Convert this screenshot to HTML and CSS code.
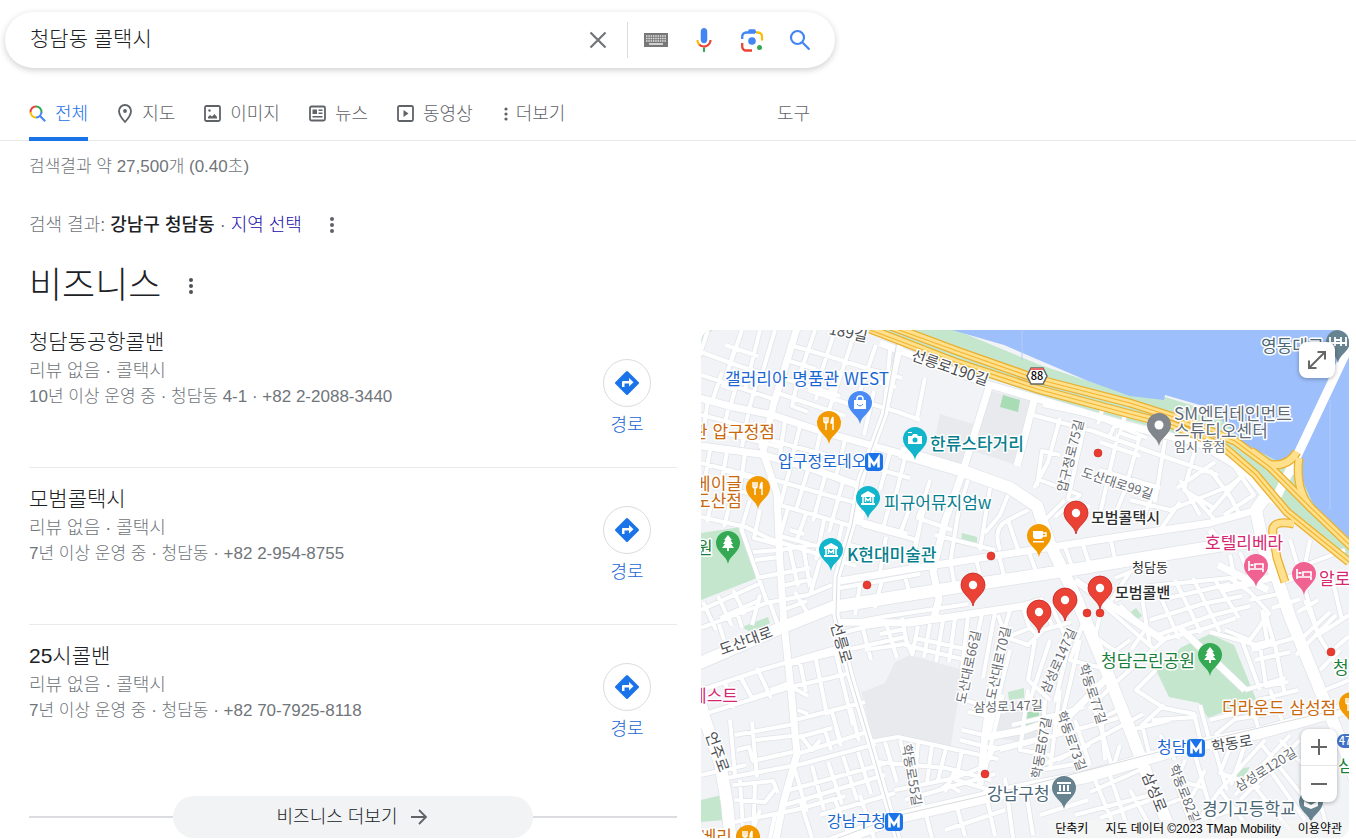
FILE: index.html
```html
<!DOCTYPE html>
<html lang="ko">
  <head>
    <meta charset="UTF-8" />
    <meta name="viewport" content="width=device-width, initial-scale=1.0" />
    <title>청담동 콜택시</title>
    <link rel="stylesheet" href="styles.css">
  </head>
  <body>
    <form class="search" role="search">
      <input class="search-input" type="text" name="q" value="청담동 콜택시" aria-label="검색" />
      <button class="icon-btn" type="reset" aria-label="지우기">
        <svg width="24" height="24" viewBox="0 0 24 24"><path d="M4.500 4.500l15 15M19.500 4.500l-15 15" stroke="#70757a" stroke-width="2.200" /></svg>
      </button>
      <span class="divider"></span>
      <button class="icon-btn" type="button" aria-label="키보드">
        <svg width="24" height="14" viewBox="0 0 24 14">
          <path fill="#777" d="M0 0h24v14H0z" />
          <path d="M2 3h20M2 5.500h20M2 8h20" stroke="#e4e4e4" stroke-width="1.500" stroke-dasharray="1.500 .8" />
          <path d="M5 11h14" stroke="#eee" stroke-width="1.500" />
        </svg>
      </button>
      <button class="icon-btn" type="button" aria-label="음성 검색">
        <svg width="26" height="26" viewBox="0 0 24 24">
          <path fill="#4285f4" d="M12 15c1.700 0 3-1.300 3-3V4c0-1.700-1.300-3-3-3S9 2.300 9 4v8c0 1.700 1.300 3 3 3z" />
          <path fill="#34a853" d="M11 18.900h2V23h-2z" />
          <path fill="#fbbc04" d="M7 12H5c0 1.900.8 3.700 2 5l1.400-1.400C7.600 14.700 7 13.400 7 12z" />
          <path fill="#ea4335" d="M12 17c-1.400 0-2.700-.6-3.600-1.500L7 16.900C8.300 18.200 10.100 19 12 19c3.900 0 7-3.100 7-7h-2c0 2.800-2.200 5-5 5z" />
        </svg>
      </button>
      <button class="icon-btn" type="button" aria-label="이미지로 검색">
        <svg width="24" height="24" viewBox="0 0 24 24" fill="none" stroke-width="2.300">
          <path stroke="#4285f4" d="M2.200 11V8.500a4 4 0 0 1 4-4H15" />
          <path fill="#4285f4" d="M7.500 5l1-3q.4-.8 1.300-.8h4.400q.9 0 1.300.8l1 3z" />
          <path stroke="#fbbc04" d="M16 4.500h2a4 4 0 0 1 4 4v4" />
          <path stroke="#ea4335" d="M2.200 15v3.500a4 4 0 0 0 4 4H12" />
          <circle cx="12" cy="13" r="3.800" fill="#4285f4" />
          <circle cx="19.500" cy="19.500" r="2.500" fill="#34a853" />
        </svg>
      </button>
      <button class="icon-btn" type="submit" aria-label="검색">
        <svg width="24" height="24" viewBox="0 0 24 24" fill="none" stroke="#4285f4" stroke-width="2.200"><circle cx="9.500" cy="9.500" r="6.500" /><path d="M14.500 14.500l7 7" /></svg>
      </button>
    </form>

    <nav class="tabs-bar">
      <div class="tabs">
        <a class="tab active" href="#">
          <svg width="18" height="18" viewBox="0 0 18 18" fill="none" stroke-width="2">
            <path stroke="#ea4335" d="M1.500 7.500A5.500 5.500 0 0 1 7 1.500" />
            <path stroke="#34a853" d="M7 1.500a5.500 5.500 0 0 1 5.500 6" />
            <path stroke="#fbbc04" d="M1.500 7a5.500 5.500 0 0 0 5.500 5.500" />
            <path stroke="#4285f4" d="M7 12.500A5.500 5.500 0 0 0 12.500 7M10.800 10.800l5.400 5.400" />
          </svg>
          전체</a>
        <a class="tab" href="#">
          <svg width="16" height="20" viewBox="0 0 16 20"><path d="M8 1a6 6 0 0 0-6 6c0 4.500 6 11 6 11s6-6.500 6-11a6 6 0 0 0-6-6z" fill="none" stroke="#5f6368" stroke-width="1.800" /><circle cx="8" cy="7" r="1.900" fill="#5f6368" /></svg>
          지도</a>
        <a class="tab" href="#">
          <svg width="17" height="18" viewBox="0 0 17 18"><rect x="1" y="1" width="15" height="15" rx="1.500" fill="none" stroke="#5f6368" stroke-width="1.800" /><circle cx="5.500" cy="5.500" r="1.200" fill="#5f6368" /><path fill="#5f6368" d="M4 13.500v-1.500l2-2 2 1.500 2.500-2.500 2.500 3v1.500z" /></svg>
          이미지</a>
        <a class="tab" href="#">
          <svg width="17" height="18" viewBox="0 0 17 18"><rect x="1" y="1.500" width="15" height="14" rx="1.500" fill="none" stroke="#5f6368" stroke-width="1.800" /><path fill="#5f6368" d="M3.500 4.500H8V9H3.500zM9.500 4.500h4V6h-4zM9.500 7.500h4V9h-4zM3.500 11h10v1.500h-10z" /></svg>
          뉴스</a>
        <a class="tab" href="#">
          <svg width="17" height="18" viewBox="0 0 17 18"><rect x="1" y="1" width="15" height="15" rx="1.500" fill="none" stroke="#5f6368" stroke-width="1.800" /><path fill="#5f6368" d="M6.500 5l5 3.500-5 3.500z" /></svg>
          동영상</a>
        <button class="tab tab-more" type="button">
          <svg width="8" height="16" viewBox="0 0 8 16" fill="#5f6368"><circle cx="4" cy="3" r="1.600" /><circle cx="4" cy="8" r="1.600" /><circle cx="4" cy="13" r="1.600" /></svg>
          더보기</button>
        <button class="tab tools" type="button">도구</button>
      </div>
    </nav>

    <main class="content">
      <p class="stats">검색결과 약 27,500개 (0.40초)</p>
      <p class="location">
        <span>검색 결과: <b>강남구 청담동</b> · <a href="#">지역 선택</a></span>
        <button class="dots" type="button" aria-label="옵션">
          <svg width="8" height="18" viewBox="0 0 8 18" fill="#5f6368"><circle cx="4" cy="3" r="2" /><circle cx="4" cy="9" r="2" /><circle cx="4" cy="15" r="2" /></svg>
        </button>
      </p>
      <div class="heading">
        <h1>비즈니스</h1>
        <button class="dots" type="button" aria-label="이 결과에 대한 정보">
          <svg width="8" height="18" viewBox="0 0 8 18" fill="#4d5156"><circle cx="4" cy="3" r="2" /><circle cx="4" cy="9" r="2" /><circle cx="4" cy="15" r="2" /></svg>
        </button>
      </div>

      <div class="columns">
        <section>
          <ul class="places">
            <li class="place">
              <div class="info">
                <h2>청담동공항콜밴</h2>
                <p>리뷰 없음 · 콜택시</p>
                <p class="detail">10년 이상 운영 중 · 청담동 4-1 · +82 2-2088-3440</p>
              </div>
              <a class="route" href="#">
                <span class="circle"><svg width="24" height="24" viewBox="0 0 24 24"><path fill="#1a73e8" d="M11 .5q1-1 2 0L23.500 11q1 1 0 2L13 23.500q-1 1-2 0L.5 13q-1-1 0-2z" /><path fill="#fff" d="M7 16v-5q0-1 1-1h6V7l4.500 4.200L14 15.500v-3H9.500V16z" /></svg></span>
                경로</a>
            </li>
            <li class="place">
              <div class="info">
                <h2>모범콜택시</h2>
                <p>리뷰 없음 · 콜택시</p>
                <p class="detail">7년 이상 운영 중 · 청담동 · +82 2-954-8755</p>
              </div>
              <a class="route" href="#">
                <span class="circle"><svg width="24" height="24" viewBox="0 0 24 24"><path fill="#1a73e8" d="M11 .5q1-1 2 0L23.500 11q1 1 0 2L13 23.500q-1 1-2 0L.5 13q-1-1 0-2z" /><path fill="#fff" d="M7 16v-5q0-1 1-1h6V7l4.500 4.200L14 15.500v-3H9.500V16z" /></svg></span>
                경로</a>
            </li>
            <li class="place">
              <div class="info">
                <h2>25시콜밴</h2>
                <p>리뷰 없음 · 콜택시</p>
                <p class="detail">7년 이상 운영 중 · 청담동 · +82 70-7925-8118</p>
              </div>
              <a class="route" href="#">
                <span class="circle"><svg width="24" height="24" viewBox="0 0 24 24"><path fill="#1a73e8" d="M11 .5q1-1 2 0L23.500 11q1 1 0 2L13 23.500q-1 1-2 0L.5 13q-1-1 0-2z" /><path fill="#fff" d="M7 16v-5q0-1 1-1h6V7l4.500 4.200L14 15.500v-3H9.500V16z" /></svg></span>
                경로</a>
            </li>
          </ul>
          <div class="more">
            <button type="button">비즈니스 더보기
              <svg width="20" height="20" viewBox="0 0 20 20" fill="none" stroke="#5f6368" stroke-width="1.800"><path d="M2 10h15M10 3l7 7-7 7" /></svg>
            </button>
          </div>
        </section>

        <section class="map">
          <svg class="map-canvas" viewBox="701 330 648 508" preserveAspectRatio="xMidYMid slice">
            <defs>
              <path id="pin" d="M0 21C-1 13-12 9-12 0A12 12 0 0 1 12 0C12 9 1 13 0 21z" />
              <g id="redpin"><use href="#pin" fill="#ea4335" stroke="#c5221f" stroke-width=".8" /><circle r="4.200" fill="#fff" /></g>
              <g id="food" stroke="#fff" stroke-width="1.500" fill="none"><path d="M-5-6v4q0 2 2 2t2-2v-4M-3-6V7" /><path d="M4-6V7M4-6q-2 2-2 6h2" fill="#fff" /></g>
              <g id="museum" fill="#fff"><path d="M-7-3L0-7l7 4v2H-7zM-7 5H7v2H-7z" /><path d="M-5-1V5M5-1V5M-2.500 4V0L0 2.500 2.500 0v4" fill="none" stroke="#fff" stroke-width="1.500" /></g>
              <g id="bed" fill="none" stroke="#fff" stroke-width="1.700"><path d="M-7-5V5M-7 3H7V6M7 2V-2H-1V2" /><path d="M-4-2v2" stroke-width="3" /></g>
              <path id="tree" fill="#fff" d="M0-8l4 5H2.500L5 1H3l3 4H1v3h-2V5h-5l3-4h-2l2.500-4H-4z" />
              <g id="metro"><rect x="-9" y="-9" width="18" height="18" rx="4" fill="#1a73e8" /><path d="M-4.500 5.500V-4L0 2.500 4.500-4v9.500" fill="none" stroke="#fff" stroke-width="2.600" /></g>

              <!-- side streets -->
              <path id="streets" d="
                M701 352l38 14 36 11M708 330l-10 30M742 330l-16 46M760 330l-15 60M775 330l-13 44M701 375l72 24
                M725 345l33 11M722 372l-10 30M740 372l-9 32M758 378l-9 31M735 390l-14-5M735 348l-4 12
                M790 345l38 11 44 14 30 8M786 360l30 9M815 330l-17 50M835 330l-20 62M855 332l-26 78M876 345l-20 58
                M808 390l35 12 24 8M782 378l58 18M800 370l-8 36 16 6M820 378l-4 22M838 370l-9 26M775 392l70 24
                M890 350l-5 55M858 400l40 12 22 8M870 380l26 7M925 378l-8 40M864 435l10-44
                M701 415l60 15M708 400l-5 35M728 410l-7 30M748 414l-6 33M720 432l60 15M765 428l-5 20
                M785 420l-6 42M800 426l-9 36M820 434l-8 38M845 440l-9 36M870 448l-8 34M770 440l90 24 50 14M890 452l-10 38M905 458l-9 36
                M701 463l55 14M710 450l-6 35M727 452l-7 36M745 454l-7 46M701 480l50 14M722 470l30 8M768 478l45 13 47 13
                M790 468l-10 38M808 470l-12 40M825 476l-12 45M843 482l-14 50M872 490l-12 32M892 496l-10 36M912 502l-12 32M780 505l75 22
                M701 517l45 10 24 12 86 27M712 500l-5 22M730 503l-6 24M750 500l-9 30M760 510l-6 28 22 6M788 508l-8 28 30 8M806 514l-10 28M824 520l-8 40M790 530l14 4M842 525l-10 44
                M741 528l26 74M753 552l28-2 30-5 25 3M755 560l24-3M790 550l8 36M803 545l7 42M756 578l54-10M782 586l30-7M820 560l-10 35
                M701 610l60-27M703 602l13 28M718 596l14 30M733 590l12 24M760 595l-8 30M701 628l65-25 42-8 24-10M720 618l40-18M724 640l-5-16M742 628l-5-16M770 603l8 22M795 592l13 22M783 610l24-9
                M840 588l80-14M860 585l-5 30M882 580l-7 28M905 576l6 24M880 572l6-35M912 565l8-40M850 545l67 18M862 525l55 15M925 505l-15 60M948 512l-13 50M935 535l60 15
                M968 480l-10 34-8 50M990 488l-10 62M1008 495l-8 20-15 18M930 480l-12 38 34 12M935 500l30 8M932 562l5 25M950 560l4 22M975 556l5 18M998 552l6 24M1028 550l9 24M1000 550q-8-22 8-30l20-10M1008 520l10 30M1065 547l8 22M1082 542l8 24M1110 537l6 26
                M838 625l50-9 80-12M845 632l20-5 75-11M820 655l40-8 45-10 7 17M862 625l9 35M885 620l12 38M865 650l40-6M902 618l5 26M880 634l25-5
                M918 626l-6 30M930 624l-6 33M943 620l-7 42M955 618l-6 44M968 616l-6 52M982 614l-4 18M995 612l-12 66M1010 610l-8 28M905 645l65 16M915 638l55 12
                M701 690l60-20 85-25M725 683l9 25M740 676l12 22 15-5M757 668l14 30M790 664l50-12M701 715l90-28 60-14M800 662l6 30M815 655l12 60M770 690l16-6 22 12M835 650l18 75
                M730 720l5 55M752 722l5 55M735 735l60-11M756 740l36-4M757 760l36-8M737 750l12-3 4 14 8-2M795 720l70-18M796 738l36-10M798 710l10 4M832 712l8 28M850 705l9 36M854 690l12 38M800 735l12 15 8-10M825 730l6 20M836 728l5 18M867 732l-70 22
                M701 775l45-10M727 778l75-14 74-20M733 785l40-4 5 12M795 770l12 42M812 766l12 44M828 762l14 42M843 756l14 44M858 752l13 42M790 790l100-28M785 805l100-30M755 785l-2 52M740 780l3 50M735 800l30 2 12-15M760 810l-10 28M800 800l12 38M820 815l75-22M735 822l60-12 50-14M775 815l-5 23M835 800l15 38M860 795l14 43
                M870 742l28-5 100 22M876 762l70 6 45 12M885 742l12 40M900 740l12 50M918 742l-3 40M932 745l-5 37M946 748l-8 32M955 770l-10 22M962 750l-6 30 34 10M895 790l60-12 30-12 10-20M905 800l90-26M920 792l12 46M940 790l8-6 12 8M955 800l10 36M985 790l10 46M1005 778l8 60M1025 785l8 50M945 830l60-20
                M998 615l8 22 22 8 15-15 28-8M1023 607l6 20 10 10M1050 603l16 35M1040 600l12 25M1000 640l30-12M1010 650l-22 88M1035 640l-7 40 22 20M1050 640l-20 60M1070 640l-15 62M1084 620l-14 40 32 8M960 740l35 9 42-10M965 700l40 12M968 712l25 5M962 730l30 7M1003 695l-18 75M1028 690l-8 60 30 5M1012 725l42-10 30-8
                M1080 640l-22 95M1000 750l28-7 90-25M1045 700l-5 70 35-6M1088 690l10 30 20-10M1100 700l5 60M1060 690l-10 80M1120 745l-6 20M1100 725l12 42M1075 720l15 45M1030 770l60-25M1058 760l30-16 55-30
                M1043 405l52 11 52 22M1033 415l60 16 55 20 70 24M1060 418l-12 44-14 26M1085 424l-7 30-10 45 22 8M1118 434l-18 80M1100 442l40 14M1140 436l-15 54-10 25M1060 455l-18-4-5 35M1040 480l40 15-25 22M1065 500l-20 20M1100 470l60 18M1165 440l-10 62M1195 450l-11 40 30 18M1215 462l-38 26M1130 500l40 10 60-24 22-18M1180 480l20 35M1155 490l-15 35M1210 470l24 32M1230 460l24 35-30 20M1240 478l-30 34
                M1102 410l-4 14M1115 425l-6 12M1125 415l-5 18 18 6M1215 520l-22-25M1240 515l-14-26M1160 530l20-28
                M1115 578l45-18M1130 572l-20 30M1115 600l35-14 80-8 20 14 18 20M1140 586l10 60M1155 584l24 55M1175 580l26 53M1193 578l27 54M1215 580l24 38M1230 555l5 25M1240 552l12 30M1160 600l70-16M1150 620l52-16 40-8M1155 636l55-20 40-10M1100 602l55 48M1120 605l25 25-14 20M1100 615l-5 22 40 28 35-30M1135 665l-22 20-24 24M1130 640l-30 22M1160 640l40-10 36-12M1225 630l25 10 20-28M1240 635l20 55M1265 612l8 28-22 6M1250 600l38-8M1272 608l28-9M1252 650l42-12
                M1210 632l50 14 6 40 22-4M1262 610l5 30M1275 645l10 50M1255 660l35-8M1245 690l40-12M1258 700l40-10M1270 690l12 30
                M1290 540l12 40 15 50M1310 540l-5 25 40-15M1305 600l14 36 18 30M1296 655l40-40M1300 640l30-28M1318 600l-20 12M1330 570l12 50M1318 635l31-20M1335 648l14-12M1320 670l20-20M1325 690l24-10
                M1156 670l-20 20 28 18 30 6 10 40M1164 705l-22 20 8 32M1152 720l45-3M1200 705l12 45M1210 720l50-13M1215 735l20-16 40-6M1250 700l10 34M1130 730l40-10M1160 735l15 25M1185 760l-8 20 28 8M1195 755l20 70M1215 750l12 40M1205 770l-15 30M1230 748l-10 25 40 14M1245 745l-14 40M1265 740l-45 50-25 35M1290 735l-55 60M1240 800l60-60M1262 745l40 50M1280 740l30 32M1220 790l30 40M1245 775l45 55M1270 770l35 50M1175 780l18 50M1150 800l-50 18M1140 770l-50 22M1110 775l20 60M1095 780l24 58M1088 800l-48 15M1130 790l25 45M1165 805l30-12M1310 770l20 66M1200 820l60-18M1075 815l75-20M1180 835l40-13"
              />
              <path id="roads" d="
                M700 398l33 9 40 8 47 16 100 28
                M797 328l-24 78-10 46 14 42 3 70 4 60 6 56 7 74-14 50-8 40
                M990 384l-27 87-18 50-12 50 6 28-6 22 M1034 401l-17 65
                M880 343l107 41 143 42 70 18 44 26 26 32
                M1257 510l-47 13-80 12-110 17-110 17-70 12
                M838 622l72 1 113-17 20-6
                M701 446l59 8 50 14 50 18-3 35 50 14
                M900 345l-16 70-24 65-8 45-15 52-1 38 14 60 20 67 28 98
                M1005 640l-14 50-6 45-5 50M1245 690l-65-62M1163 640l-63-42-25-18
                M1110 675l-40 40-45 15-38 7M1220 590l35-8 22-6M1210 530l15 20
                M1268 590l-50-25M1285 580l24-8" />
              <path id="avenues" d="
                M900 452l60 18 50 18 27 18 12 36 28 58 32 77 20 50 20 53 30 70
                M693 666l90-39 50-20 87-14 57-9 100-15 72-12 81-13 34-2 18-4
                M697 690l8 30 15 43 7 40 4 40
                M1270 490l-14 20 8 40 13 28 13 39 26 63 12 30 20 48 16 50
                M830 843l70-26 130-30 56-10 100-30 73-14 92-26" />
            </defs>

            <rect x="701" y="330" width="648" height="508" fill="#f1f3f6" />
            <g fill="#e8eaee">
              <path d="M987 390l46 11-16 64-44-14zM940 414l33 10-12 42-30-10zM862 692l23-9 10-21 15-7 53 15-13 80-53-12-24 3-13-55zM990 710l45-14 15 25-20 22-42-6z" />
            </g>
            <g fill="#c3e6cd">
              <path d="M866 330h90l84 35 90 30 35 2 45 14 40 32 32 22 28 24 39 40v35l-62-54-58-46-57-32-93-24-100-33z" />
              <path d="M701 533l40-6 16 51-56 22zM742 627l26-10 2 6-18 10zM1210 634l24 11 22 54-48 19-9-15-30-6-13-27 26-23zM962 533l15 4v8l-16-3zM1128 614l8-6 6 8-8 6zM701 800l21-5 2 25-23 2zM1238 769l12-2-6 10-8 3zM1008 692l16-4v10l-15 2zM701 330h12l-12 10z" />
              <path fill="#a8dcb5" d="M1003 395l17 5-2 12-18-5zM1026 712h13v16l-13 1z" />
            </g>
            <path fill="#9dbffb" d="M952 330h397v208l-36-34-20-45-14 3-34-18-35-36-45-13-1 5-34-4-42-15-84-36z" />
            <path d="M1022 330v30M1330 400v110" stroke="#b3cdfb" />

            <g fill="none" stroke-linejoin="round">
              <use href="#streets" stroke="#e0e3e8" stroke-width="5.500" />
              <use href="#roads" stroke="#e0e3e8" stroke-width="8.500" />
              <use href="#avenues" stroke="#e0e3e8" stroke-width="13.500" />
              <use href="#streets" stroke="#fff" stroke-width="4" />
              <use href="#roads" stroke="#fff" stroke-width="7" />
              <use href="#avenues" stroke="#fff" stroke-width="12" />
              <path d="M899 330l-15 85-24 65-8 45-15 52-1 38 14 60 20 67 28 98M830 841l70-26 130-30 156-40 163-38" stroke="#d9dbdf" />
            </g>

            <!-- riverside expressway and bridge -->
            <g fill="none">
              <path d="M1352 340l-55 116-24 48" stroke="#fff" stroke-width="9" />
              <g stroke="#eab030" stroke-width="9">
                <path id="ramps" d="M1297 452q-10 16-28 12l-18-13M1299 458q-4 32 12 50M1294 524q-24-5-21 10l4 24 8 24" />
                <path id="expressway" d="M885 324l75 28 77 27 93 24 50 16 55 22 35 26 40 40 45 43M870 329l85 33 82 27 93 25 43 11 52 23 30 26 32 38 62 50" />
              </g>
              <g stroke="#ffe08c" stroke-width="6.500"><use href="#ramps" /><use href="#expressway" /></g>
              <path d="M885 325l75 27 77 27 93 24 50 16 55 22 35 26 40 40 45 43M870 330l85 32 82 27 93 25 43 11 52 23 30 26 32 38 62 50" stroke="#f2b632" stroke-width="1.200" />
            </g>

            <g class="street-label">
              <text x="848" y="338" transform="rotate(12 848 334)">189길</text>
              <text x="950" y="373" transform="rotate(19 950 368)">선릉로190길</text>
              <text x="746" y="646" transform="rotate(-20 746 641)">도산대로</text>
              <text x="841" y="648" transform="rotate(74 841 643)">선릉로</text>
              <text x="717" y="757" transform="rotate(70 717 752)">언주로</text>
              <text x="1232" y="749" transform="rotate(-10 1232 744)">학동로</text>
              <text x="1154" y="797" transform="rotate(68 1154 792)">삼성로</text>
            </g>
            <g class="street-label small">
              <text x="1071" y="460" transform="rotate(-76 1071 456)">압구정로75길</text>
              <text x="1117" y="488" transform="rotate(18 1117 484)">도산대로99길</text>
              <text x="969" y="671" transform="rotate(-78 969 667)">도산대로66길</text>
              <text x="999" y="667" transform="rotate(-78 999 663)">도산대로70길</text>
              <text x="1059" y="665" transform="rotate(-66 1059 661)">삼성로147길</text>
              <text x="1092" y="698" transform="rotate(72 1092 694)">학동로77길</text>
              <text x="1008" y="711" transform="rotate(-2 1008 707)">삼성로147길</text>
              <text x="1042" y="752" transform="rotate(-80 1042 748)">학동로67길</text>
              <text x="1071" y="745" transform="rotate(70 1071 741)">학동로73길</text>
              <text x="911" y="779" transform="rotate(80 911 775)">학동로55길</text>
              <text x="1184" y="798" transform="rotate(68 1184 794)">학동로82길</text>
              <text x="1266" y="774" transform="rotate(-32 1266 770)">삼성로120길</text>
            </g>

            <g transform="translate(1037 376)"><path d="M-10 0l4-8H6l4 8-4 8H-6z" fill="#fff" stroke="#666" stroke-width="1.500" /><path d="M-6-8H6l1 2H-7z" fill="#e66" /><text class="shield" y="4">88</text></g>

            <!-- points of interest -->
            <g transform="translate(860 403)"><use href="#pin" fill="#4a8af4" /><path fill="#fff" d="M-6-3H6V6H-6z" /><path d="M-3-2v-2q0-3 3-3t3 3v2" fill="none" stroke="#fff" stroke-width="1.500" /><path d="M-3 1q3 4 6 0" stroke="#4a8af4" fill="none" /></g>
            <g transform="translate(829 423)"><use href="#pin" fill="#f29900" /><use href="#food" /></g>
            <g transform="translate(758 488)"><use href="#pin" fill="#f29900" /><use href="#food" /></g>
            <g transform="translate(748 837)"><use href="#pin" fill="#f29900" /><use href="#food" /></g>
            <g transform="translate(1351 704)"><use href="#pin" fill="#f29900" /><use href="#food" /></g>
            <g transform="translate(1039 536)"><use href="#pin" fill="#f29900" /><path fill="#fff" d="M-6-5H4v5q0 3-3 3h-4q-3 0-3-3zM-6 5H5v1.500H-6z" /><path d="M4-3h3v3H4" stroke="#fff" fill="none" stroke-width="1.500" /></g>
            <g transform="translate(915 439)"><use href="#pin" fill="#12b5cb" /><path fill="#fff" d="M-7-3h4l1-2h4l1 2h4v8H-7zM-7-7h4v1h-4z" /><circle cy="1" r="2.500" fill="#12b5cb" /></g>
            <g transform="translate(868 498)"><use href="#pin" fill="#12b5cb" /><use href="#museum" /></g>
            <g transform="translate(831 550)"><use href="#pin" fill="#12b5cb" /><use href="#museum" /></g>
            <g transform="translate(728 543)"><use href="#pin" fill="#34a853" /><use href="#tree" /></g>
            <g transform="translate(1210 655)"><use href="#pin" fill="#34a853" /><use href="#tree" /></g>
            <g transform="translate(1159 425)"><use href="#pin" fill="#80868b" /><circle r="4.500" fill="#fff" /></g>
            <g transform="translate(1256 566)"><use href="#pin" fill="#f06292" /><use href="#bed" /></g>
            <g transform="translate(1304 574)"><use href="#pin" fill="#f06292" /><use href="#bed" /></g>
            <g transform="translate(1338 342)"><use href="#pin" fill="#67838f" /><path d="M-8 4V-5M8 4V-5M-3 4V-5M3 4V-5M-9 1H9M-3-2H3" stroke="#fff" stroke-width="1.800" /></g>
            <g transform="translate(1064 788)"><use href="#pin" fill="#67838f" /><path fill="#fff" d="M-7-6H7v2H-7zM-7 4H7v2H-7zM-5-3h2v6h-2zM-1-3h2v6h-2zM3-3h2v6H3z" /></g>
            <g transform="translate(1311 802)"><use href="#pin" fill="#67838f" /><path fill="#fff" d="M-7-1L0 3 7-1v5L0 7l-7-3z" /></g>
            <g transform="translate(1345 741)"><rect x="-8" y="-7" width="24" height="14" rx="7" fill="#4271c6" /><text class="shield white" x="0" y="4">47</text></g>

            <g class="poi">
              <g fill="#1a67d2"><text x="725" y="385">갤러리아 명품관 WEST</text><text class="station" x="778" y="467">압구정로데오</text><text class="station" x="1157" y="753">청담</text><text class="station" x="827" y="827">강남구청</text></g>
              <g fill="#c9690c"><text class="end" x="775" y="438">관 압구정점</text><text class="end" x="742" y="490">베이글</text><text class="end" x="742" y="507">도산점</text><text x="1222" y="714">더라운드 삼성점</text><text class="end" x="732" y="843">베리</text></g>
              <g fill="#087f8e"><text class="strong" x="930" y="450">한류스타거리</text><text x="884" y="509">피규어뮤지엄w</text><text class="strong" x="847" y="561">K현대미술관</text></g>
              <g fill="#188038"><text x="697" y="554">원</text><text x="1101" y="667">청담근린공원</text><text x="1333" y="674">청</text><text x="1338" y="772">삼성</text></g>
              <g fill="#d62872"><text x="1205" y="549">호텔리베라</text><text x="1319" y="585">알로</text><text class="end" x="738" y="702">베스트</text></g>
              <g fill="#5f6b76"><text x="1174" y="420">SM엔터테인먼트</text><text x="1174" y="437">스튜디오센터</text><text class="tiny" x="1174" y="451">임시 휴점</text></g>
              <g fill="#4b6875"><text x="1261" y="352">영동대교</text><text x="987" y="800">강남구청</text><text x="1202" y="815">경기고등학교</text></g>
              <g fill="#2d2f31"><text class="small strong" x="1091" y="523">모범콜택시</text><text class="small strong" x="1115" y="598">모범콜밴</text><text class="tiny" x="1132" y="572">청담동</text></g>
            </g>
            <use href="#metro" x="874" y="462" />
            <use href="#metro" x="1196" y="748" />
            <use href="#metro" x="894" y="822" />

            <g fill="#ea3b30" stroke="#c5221f" stroke-width=".5">
              <circle cx="1098" cy="453" r="4" /><circle cx="991" cy="556" r="4" /><circle cx="867" cy="585" r="4" /><circle cx="1087" cy="613" r="4" /><circle cx="1100" cy="613" r="4" /><circle cx="1331" cy="652" r="4" /><circle cx="985" cy="774" r="4" />
            </g>
            <use href="#redpin" x="1076" y="513" />
            <use href="#redpin" x="973" y="585" />
            <use href="#redpin" x="1100" y="588" />
            <use href="#redpin" x="1065" y="600" />
            <use href="#redpin" x="1039" y="612" />
          </svg>
          <button class="map-btn fullscreen" type="button" aria-label="지도 확대">
            <svg width="22" height="22" viewBox="0 0 22 22" fill="none" stroke="#666" stroke-width="2"><path d="M3 19L19 3M11.500 3H19v7.500M3 11.500V19h7.500" /></svg>
          </button>
          <div class="map-btn zoom">
            <button type="button" aria-label="확대"><svg width="18" height="18" viewBox="0 0 18 18"><path d="M9 1v16M1 9h16" stroke="#666" stroke-width="2" /></svg></button>
            <button type="button" aria-label="축소"><svg width="18" height="18" viewBox="0 0 18 18"><path d="M1 9h16" stroke="#666" stroke-width="2" /></svg></button>
          </div>
          <div class="credits">
            <button type="button">단축키</button>
            <span>지도 데이터 ©2023 TMap Mobility</span>
            <a href="#">이용약관</a>
          </div>
        </section>
      </div>
    </main>
  </body>
</html>
```

FILE: styles.css
```css
* {
  box-sizing: border-box;
}
body {
  margin: 0;
  background: #fff;
  color: #202124;
  font-family: "Liberation Sans", Arial, "Noto Sans CJK KR", sans-serif;
  font-size: 18px;
  font-weight: 300;
  line-height: 26px;
}
p,
h1,
h2,
ul {
  margin: 0;
  padding: 0;
}
a {
  text-decoration: none;
}
button {
  padding: 0;
  border: none;
  background: none;
  color: inherit;
  font: inherit;
  cursor: pointer;
}
svg {
  display: block;
  flex: none;
}

/* search box */
.search {
  display: flex;
  align-items: center;
  max-width: 830px;
  height: 56px;
  margin: 12px 5px 0;
  padding: 0 11px 0 25px;
  border-radius: 28px;
  box-shadow: 0 2px 6px rgba(32, 33, 36, 0.22);
}
.search-input {
  flex: 1;
  min-width: 0;
  padding: 0 0 3px;
  border: none;
  outline: none;
  background: none;
  color: #202124;
  font: inherit;
  font-size: 21px;
}
.icon-btn {
  display: flex;
  justify-content: center;
  width: 48px;
}
.divider {
  width: 1px;
  height: 36px;
  margin: 0 4px 0 5px;
  background: #dadce0;
}

/* tabs */
.tabs-bar {
  margin-top: 18px;
  border-bottom: 1px solid #e6e8eb;
}
.tabs {
  display: flex;
  gap: 29px;
  max-width: 810px;
  height: 54px;
  padding-left: 29px;
}
.tab {
  display: flex;
  align-items: center;
  gap: 9px;
  margin-bottom: -1px;
  padding-top: 4px;
  border-bottom: 4px solid transparent;
  color: #5f6368;
  white-space: nowrap;
}
.tab.active {
  gap: 8px;
  border-color: #1a73e8;
  color: #1a73e8;
}
.tab-more {
  gap: 6px;
}
.tools {
  margin-left: auto;
}

/* results */
.content {
  padding: 13px 7px 0 29px;
}
.stats,
.location {
  color: #70757a;
}
.stats,
.detail {
  font-size: 17px;
}
.location {
  display: flex;
  align-items: center;
  gap: 26px;
  margin-top: 32px;
}
.location b {
  color: #202124;
  font-weight: 500;
}
.location a {
  color: #1a0dab;
}
.heading {
  display: flex;
  align-items: center;
  gap: 26px;
  margin-top: 24px;
}
h1 {
  font-size: 36px;
  font-weight: 300;
  line-height: 48px;
}
.columns {
  display: grid;
  grid-template-columns: 1fr 1fr;
  gap: 24px;
  margin-top: 1px;
}
.places {
  list-style: none;
}
.place {
  display: flex;
  justify-content: space-between;
  min-height: 157px;
  padding: 18px 26px 0 0;
  border-bottom: 1px solid #e8eaed;
}
.place:last-child {
  border: none;
}
.info {
  color: #70757a;
}
.info h2 {
  margin-bottom: 3px;
  color: #202124;
  font-size: 21px;
  font-weight: 300;
}
.route {
  display: flex;
  flex-direction: column;
  align-items: center;
  gap: 5px;
  margin-top: 20px;
  color: #1967d2;
}
.place:first-child .route {
  margin-top: 30px;
}
.circle {
  display: flex;
  align-items: center;
  justify-content: center;
  width: 48px;
  height: 48px;
  border: 1px solid #dadce0;
  border-radius: 50%;
}
.more {
  display: flex;
  align-items: center;
  margin-top: 14px;
}
.more::before,
.more::after {
  content: "";
  flex: 1;
  height: 2px;
  background: #dadce0;
}
.more button {
  display: flex;
  align-items: center;
  justify-content: center;
  gap: 12px;
  width: 360px;
  height: 42px;
  border-radius: 21px;
  background: #f1f3f4;
}

/* map */
.map {
  position: relative;
  margin-top: 19px;
  border-radius: 12px;
  overflow: hidden;
}
.map-canvas {
  width: 100%;
  height: 100%;
}
.map-canvas text {
  font-family: "Noto Sans CJK KR", sans-serif;
  paint-order: stroke;
  stroke: #fff;
  stroke-width: 3px;
  stroke-linejoin: round;
}
.street-label text {
  fill: #4a4d52;
  font-size: 15px;
  font-weight: 400;
  text-anchor: middle;
}
.street-label.small text {
  fill: #666a70;
  font-size: 13px;
}
.poi text {
  font-size: 17px;
  font-weight: 400;
}
.poi .station {
  font-size: 16px;
}
.poi .small {
  font-size: 15px;
}
.poi .tiny {
  font-size: 13px;
}
.poi .strong {
  font-weight: 500;
}
.poi .end {
  text-anchor: end;
}
.map-canvas .shield {
  font-size: 11px;
  font-weight: 500;
  text-anchor: middle;
  stroke: none;
}
.map-canvas .white {
  fill: #fff;
}
.map-btn {
  position: absolute;
  border-radius: 8px;
  background: #fff;
  box-shadow: 0 1px 4px rgba(0, 0, 0, 0.3);
}
.fullscreen {
  top: 12px;
  right: 14px;
  display: flex;
  align-items: center;
  justify-content: center;
  width: 36px;
  height: 36px;
}
.zoom {
  right: 12px;
  bottom: 36px;
  width: 36px;
}
.zoom button {
  display: flex;
  align-items: center;
  justify-content: center;
  width: 100%;
  height: 36px;
}
.zoom button + button {
  height: 37px;
  border-top: 1px solid #e6e6e6;
}
.credits {
  position: absolute;
  right: 0;
  bottom: 0;
  display: flex;
  gap: 17px;
  padding: 0 7px 0 6px;
  background: rgba(245, 245, 245, 0.7);
  color: #000;
  font-size: 12px;
  font-weight: 400;
  line-height: 18px;
}
.credits a {
  color: inherit;
}
```
